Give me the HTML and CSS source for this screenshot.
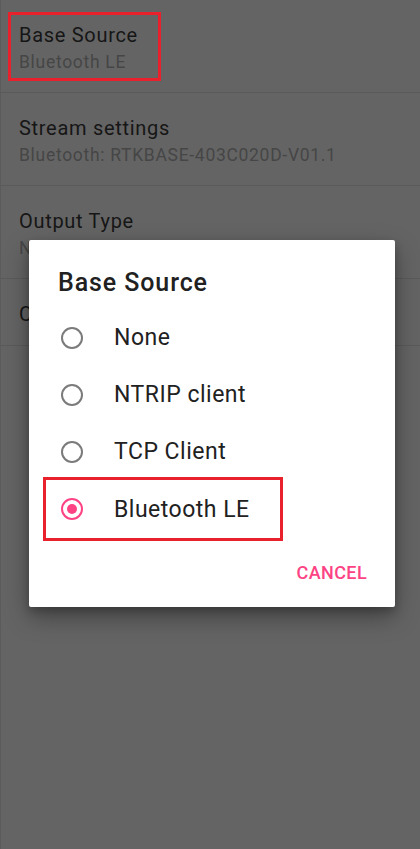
FILE: index.html
```html
<!DOCTYPE html>
<html>
<head>
<meta charset="utf-8">
<link rel="stylesheet" href="styles.css">
</head>
<body>
<div class="screen">
  <ul class="prefs">
    <li class="pref">
      <div class="pref-text highlight">
        <div class="pref-title">Base Source</div>
        <div class="pref-summary">Bluetooth LE</div>
      </div>
    </li>
    <li class="pref">
      <div class="pref-text">
        <div class="pref-title">Stream settings</div>
        <div class="pref-summary">Bluetooth: RTKBASE-403C020D-V01.1</div>
      </div>
    </li>
    <li class="pref">
      <div class="pref-text">
        <div class="pref-title">Output Type</div>
        <div class="pref-summary">None</div>
      </div>
    </li>
    <li class="pref pref-single">
      <div class="pref-text">
        <div class="pref-title">Coordinates</div>
      </div>
    </li>
  </ul>

  <div class="dialog">
    <h2 class="dialog-title">Base Source</h2>
    <ul class="options">
      <li class="option"><span class="radio"></span><span class="option-label">None</span></li>
      <li class="option"><span class="radio"></span><span class="option-label">NTRIP client</span></li>
      <li class="option"><span class="radio"></span><span class="option-label">TCP Client</span></li>
      <li class="option option-marked"><span class="radio radio-on"></span><span class="option-label">Bluetooth LE</span></li>
    </ul>
    <div class="actions">
      <button class="btn-cancel">CANCEL</button>
    </div>
  </div>
</div>
</body>
</html>
```
FILE: styles.css
```css
html, body {
  margin: 0;
  padding: 0;
}
body {
  background: #646464;
  font-family: Roboto, "Noto Sans", Arial, sans-serif;
}
.screen {
  position: relative;
  width: 420px;
  height: 849px;
  overflow: hidden;
  border-left: 1px solid #5b5b5b;
  box-sizing: border-box;
}
.prefs {
  list-style: none;
  margin: 0;
  padding: 0;
}
.pref {
  height: 92px;
  border-bottom: 1px solid #5a5a5a;
  display: flex;
  align-items: flex-start;
}
.pref-single {
  height: 66px;
}
.pref-text {
  margin-left: 7px;
  margin-top: 12px;
  padding: 8px 12px 0 8px;
  border: 3px solid transparent;
  height: 63px;
  box-sizing: border-box;
}
.highlight {
  border-color: #e8212c;
  width: 153px;
  height: 69px;
}
.pref-title {
  font-size: 20px;
  line-height: 24px;
  letter-spacing: 0.7px;
  color: #161616;
  white-space: nowrap;
}
.pref-summary {
  font-size: 17.5px;
  line-height: 22px;
  letter-spacing: 0.7px;
  margin-top: 4px;
  color: #464646;
  white-space: nowrap;
}
.dialog {
  position: absolute;
  left: 28px;
  top: 240px;
  width: 366px;
  height: 367px;
  background: #ffffff;
  border-radius: 2px;
  box-shadow: 0 10px 24px rgba(0,0,0,0.35), 0 4px 8px rgba(0,0,0,0.2);
  box-sizing: border-box;
  padding: 27px 0 0 0;
}
.dialog-title {
  margin: 0 0 0 29px;
  font-size: 25px;
  line-height: 32px;
  letter-spacing: 0.9px;
  font-weight: 500;
  color: #212121;
}
.options {
  list-style: none;
  margin: 10px 0 0 0;
  padding: 0;
}
.option {
  height: 57px;
  display: flex;
  align-items: center;
  margin-left: 14px;
  width: 240px;
  box-sizing: border-box;
  border: 3px solid transparent;
}
.option-marked {
  border-color: #e8212c;
  height: 64px;
  margin-top: -3px;
}
.radio {
  width: 22px;
  height: 22px;
  border: 2px solid #7b7b7b;
  border-radius: 50%;
  box-sizing: border-box;
  margin-left: 15px;
  flex: none;
  display: flex;
  align-items: center;
  justify-content: center;
}
.radio-on {
  border-color: #fd4384;
}
.radio-on::after {
  content: "";
  width: 10px;
  height: 10px;
  border-radius: 50%;
  background: #fd4384;
}
.option-label {
  margin-left: 31px;
  font-size: 23px;
  letter-spacing: 0.5px;
  color: #212121;
  white-space: nowrap;
}
.actions {
  display: flex;
  justify-content: flex-end;
  margin-top: 21px;
  padding-right: 28px;
}
.btn-cancel {
  background: none;
  border: none;
  padding: 0;
  font-family: Roboto, "Noto Sans", Arial, sans-serif;
  font-size: 18px;
  font-weight: 500;
  color: #fd4384;
  letter-spacing: 0.4px;
}
```
